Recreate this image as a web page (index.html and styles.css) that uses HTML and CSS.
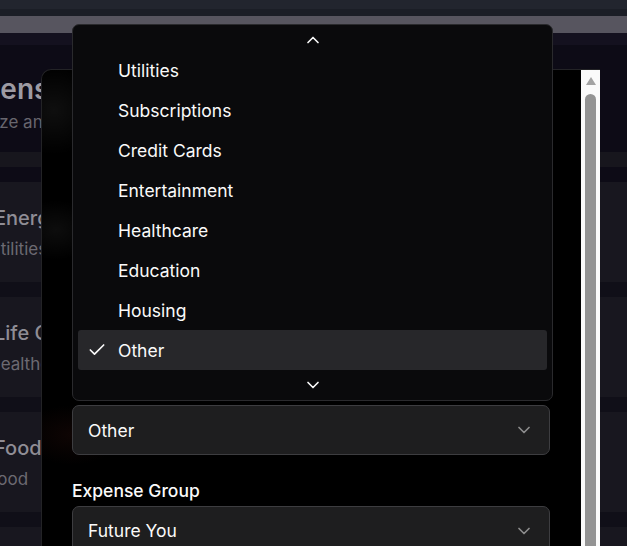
FILE: index.html
```html
<!DOCTYPE html>
<html lang="en">
<head>
<meta charset="utf-8">
<title>Expenses</title>
<link rel="stylesheet" href="styles.css">
</head>
<body>
<div class="app">
  <div class="topbar">
    <div class="tb tb1"></div>
    <div class="tb tb2"></div>
    <div class="tb tb3"></div>
    <div class="tb tb4"></div>
  </div>
  <main class="page">
    <header class="page-head">
      <h1 class="page-title">Expenses</h1>
      <p class="page-sub">Organize and track your expenses</p>
    </header>
    <div class="band"></div>
    <div class="cards">
      <div class="card"><div class="card-title">Energy</div><div class="card-sub">Utilities</div></div>
      <div class="card"><div class="card-title">Life Cover</div><div class="card-sub">Healthcare</div></div>
      <div class="card"><div class="card-title">Food</div><div class="card-sub">Food</div></div>
      <div class="card"><div class="card-title">Rent</div><div class="card-sub">Housing</div></div>
    </div>
  </main>
</div>

<div class="modal">
  <div class="modal-body">
    <button class="select-trigger">
      <span>Other</span>
      <svg class="chev-muted" viewBox="0 0 24 24" width="20" height="20"><path d="m6 9 6 6 6-6"/></svg>
    </button>
    <div class="field">
      <label class="field-label">Expense Group</label>
      <button class="select-trigger">
        <span>Future You</span>
        <svg class="chev-muted" viewBox="0 0 24 24" width="20" height="20"><path d="m6 9 6 6 6-6"/></svg>
      </button>
    </div>
  </div>
  <div class="scrollbar">
    <svg class="sb-arrow" viewBox="0 0 12 10" width="12" height="10"><path d="M6 1 L11 9 L1 9 Z"/></svg>
    <div class="sb-thumb"></div>
  </div>
</div>

<div class="popover">
  <div class="scroll-btn up">
    <svg class="chev" viewBox="0 0 24 24" width="20" height="20"><path d="m18 15-6-6-6 6"/></svg>
  </div>
  <div class="viewport">
    <div class="list">
      <div class="item">Utilities</div>
      <div class="item">Subscriptions</div>
      <div class="item">Credit Cards</div>
      <div class="item">Entertainment</div>
      <div class="item">Healthcare</div>
      <div class="item">Education</div>
      <div class="item">Housing</div>
      <div class="item selected">
        <span class="check"><svg viewBox="0 0 24 24" width="20" height="20"><path d="M20 6 9 17l-5-5"/></svg></span>
        Other
      </div>
    </div>
  </div>
  <div class="scroll-btn down">
    <svg class="chev" viewBox="0 0 24 24" width="20" height="20"><path d="m6 9 6 6 6-6"/></svg>
  </div>
</div>
</body>
</html>
```

FILE: styles.css
```css
* { box-sizing: border-box; }

html, body {
  margin: 0;
  padding: 0;
  width: 627px;
  height: 546px;
  overflow: hidden;
  background: #0d0b16;
  font-family: Inter, "Noto Sans", sans-serif;
}

.app { width: 627px; }

.topbar { display: flex; flex-direction: column; }
.tb1 { height: 9px; background: #22252e; }
.tb2 { height: 7px; background: #1b1e26; }
.tb3 { height: 17px; background: #57555f; }
.tb4 { height: 12px; background: #14111f; }

.page { display: flex; flex-direction: column; }

.page-head {
  height: 107px;
  padding-top: 26px;
}
.page-title {
  margin: 0 0 0 -50px;
  font-size: 28px;
  line-height: 36px;
  font-weight: 600;
  color: #9d9ba3;
}
.page-sub {
  margin: 4px 0 0 -54px;
  font-size: 17px;
  line-height: 22px;
  color: #68666e;
}

.band {
  height: 15px;
  background: #17161d;
  margin-bottom: 15px;
}

.cards {
  display: flex;
  flex-direction: column;
  gap: 15px;
  background: #100f18;
}
.card {
  height: 100px;
  background: #18171f;
  padding: 24px 0 0 0;
}
.card-title {
  margin-left: -6px;
  font-size: 20px;
  line-height: 24px;
  font-weight: 500;
  color: #8f8d95;
}
.card-sub {
  margin: 8px 0 0 -12px;
  font-size: 17px;
  line-height: 22px;
  color: #6c6a72;
}

/* Modal */
.modal {
  position: absolute;
  left: 41px;
  top: 69px;
  width: 559px;
  height: 520px;
  display: flex;
  background:
    radial-gradient(circle at 12px 40px, rgba(255,255,255,0.06), transparent 45px),
    radial-gradient(ellipse 40px 30px at 14px 160px, rgba(255,255,255,0.05), transparent),
    radial-gradient(ellipse 50px 30px at 30px 365px, rgba(120,40,30,0.12), transparent),
    #000;
  border: 1px solid #232326;
  border-right: 0;
  border-radius: 10px 0 0 0;
  overflow: hidden;
}
.modal-body {
  flex: 1;
  padding: 335px 31px 0 30px;
  display: flex;
  flex-direction: column;
}

.select-trigger {
  width: 478px;
  height: 50px;
  display: flex;
  align-items: center;
  justify-content: space-between;
  padding: 0 15px;
  background: #1e1e1f;
  border: 1px solid #3d3d40;
  border-radius: 7px;
  color: #fafafa;
  font-family: inherit;
  font-size: 17.5px;
}
.chev-muted {
  fill: none;
  stroke: #fafafa;
  stroke-width: 2;
  stroke-linecap: round;
  stroke-linejoin: round;
  opacity: 0.5;
}

.field {
  margin-top: 27px;
  display: flex;
  flex-direction: column;
  gap: 6px;
}
.field-label {
  font-size: 17.5px;
  line-height: 17.5px;
  font-weight: 500;
  color: #fafafa;
}

.scrollbar {
  width: 19px;
  background: #fafafa;
  display: flex;
  flex-direction: column;
  align-items: center;
  padding-top: 6px;
}
.sb-arrow { fill: #a3a3a3; display: block; }
.sb-thumb {
  margin-top: 8px;
  width: 11px;
  flex: 1;
  background: #939393;
  border-radius: 6px 6px 0 0;
}

/* Popover */
.popover {
  position: absolute;
  left: 72px;
  top: 24px;
  width: 481px;
  height: 377px;
  display: flex;
  flex-direction: column;
  background: #0a0a0c;
  border: 1px solid #2a2a2d;
  border-radius: 7px;
  overflow: hidden;
}
.scroll-btn {
  height: 30px;
  display: flex;
  align-items: center;
  justify-content: center;
}
.chev {
  fill: none;
  stroke: #fafafa;
  stroke-width: 2;
  stroke-linecap: round;
  stroke-linejoin: round;
}
.viewport {
  height: 315px;
  overflow: hidden;
  padding: 0 5px;
}
.list { margin-top: -5px; }
.item {
  position: relative;
  height: 40px;
  display: flex;
  align-items: center;
  padding-left: 40px;
  font-size: 17.5px;
  color: #fafafa;
  border-radius: 3px;
}
.item.selected { background: #27272a; }
.check {
  position: absolute;
  left: 10px;
  top: 11px;
  width: 17.5px;
  height: 17.5px;
  display: flex;
  align-items: center;
  justify-content: center;
}
.check svg {
  fill: none;
  stroke: #fafafa;
  stroke-width: 2;
  stroke-linecap: round;
  stroke-linejoin: round;
  flex: none;
}
```
